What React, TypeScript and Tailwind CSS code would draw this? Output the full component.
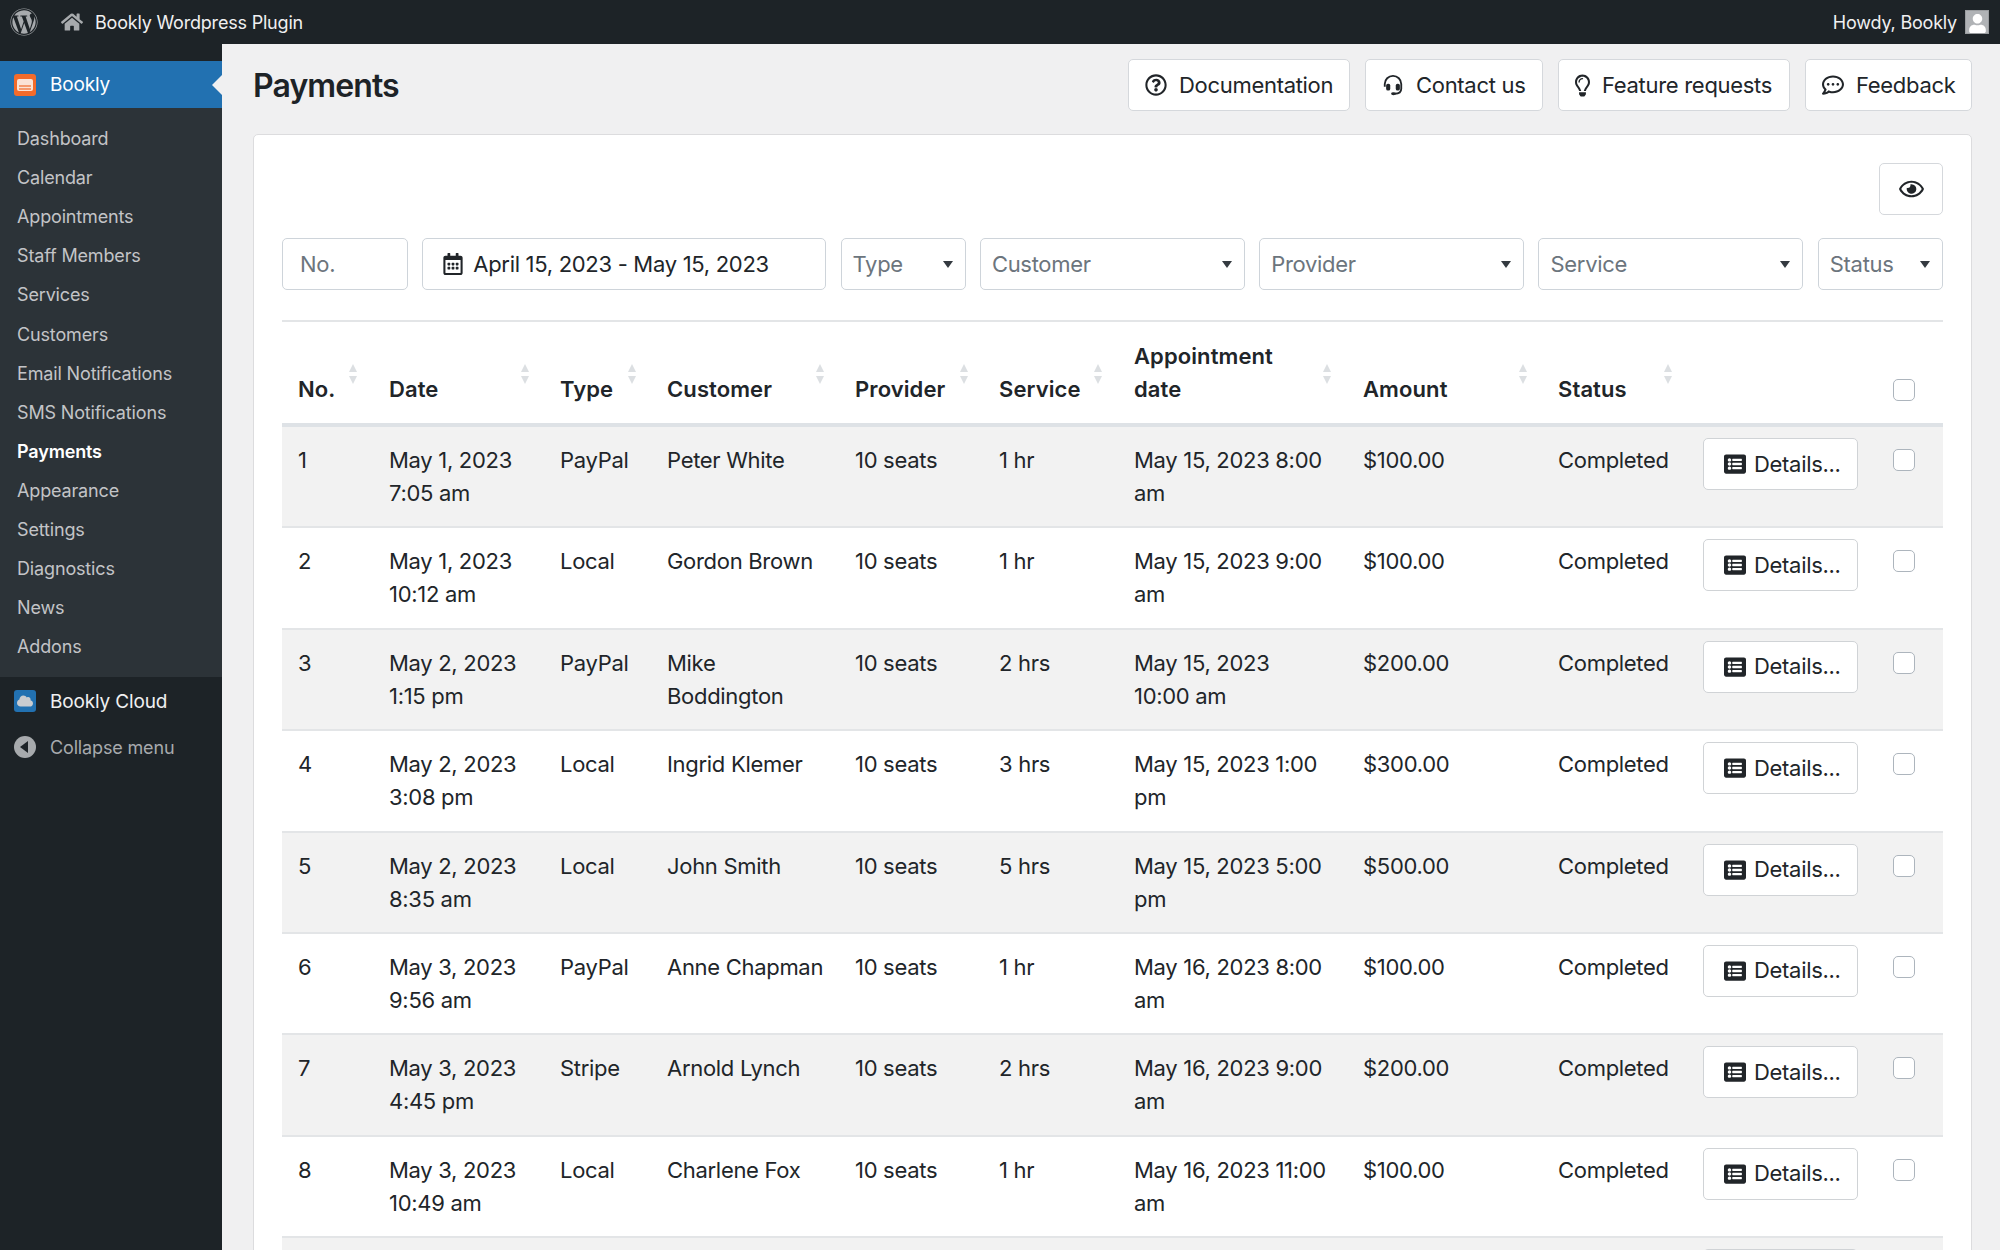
import { FaWordpress, FaHome, FaRegQuestionCircle, FaRegLightbulb, FaRegCommentDots, FaRegEye, FaRegCalendarAlt, FaListAlt, FaCloud, FaUser } from "react-icons/fa";

const menu = [
  "Dashboard",
  "Calendar",
  "Appointments",
  "Staff Members",
  "Services",
  "Customers",
  "Email Notifications",
  "SMS Notifications",
  "Payments",
  "Appearance",
  "Settings",
  "Diagnostics",
  "News",
  "Addons",
];

const rows = [
  ["1", "May 1, 2023", "7:05 am", "PayPal", "Peter White", "10 seats", "1 hr", "May 15, 2023 8:00 am", "$100.00"],
  ["2", "May 1, 2023", "10:12 am", "Local", "Gordon Brown", "10 seats", "1 hr", "May 15, 2023 9:00 am", "$100.00"],
  ["3", "May 2, 2023", "1:15 pm", "PayPal", "Mike Boddington", "10 seats", "2 hrs", "May 15, 2023 10:00 am", "$200.00"],
  ["4", "May 2, 2023", "3:08 pm", "Local", "Ingrid Klemer", "10 seats", "3 hrs", "May 15, 2023 1:00 pm", "$300.00"],
  ["5", "May 2, 2023", "8:35 am", "Local", "John Smith", "10 seats", "5 hrs", "May 15, 2023 5:00 pm", "$500.00"],
  ["6", "May 3, 2023", "9:56 am", "PayPal", "Anne Chapman", "10 seats", "1 hr", "May 16, 2023 8:00 am", "$100.00"],
  ["7", "May 3, 2023", "4:45 pm", "Stripe", "Arnold Lynch", "10 seats", "2 hrs", "May 16, 2023 9:00 am", "$200.00"],
  ["8", "May 3, 2023", "10:49 am", "Local", "Charlene Fox", "10 seats", "1 hr", "May 16, 2023 11:00 am", "$100.00"],
];

const gridCols = "grid grid-cols-[91px_171px_107px_188px_144px_135px_229px_195px_145px_190px_66px]";

const HeadsetIcon = () => (
  <svg viewBox="0 0 24 24" className="h-[24px] w-[22px]" fill="none" stroke="currentColor" strokeWidth="2">
    <path d="M3 14v-3a9 9 0 0 1 18 0v5c0 3.5-3 5.5-7 5.5" />
    <rect x="4.5" y="10.5" width="4.5" height="7.5" rx="2" fill="currentColor" stroke="none" />
    <rect x="15" y="10.5" width="4.5" height="7.5" rx="2" fill="currentColor" stroke="none" />
    <ellipse cx="12.5" cy="21.5" rx="2.6" ry="1.6" fill="currentColor" stroke="none" />
  </svg>
);

const BooklyIcon = () => (
  <div className="flex h-[22px] w-[22px] items-center justify-center rounded-[3px] bg-[#f26b2b]">
    <div className="flex h-[12px] w-[16px] flex-col justify-end rounded-[2px] bg-[#fbe3d6] pb-[1px]">
      <div className="mx-[2px] mb-[1px] h-[2px] bg-[#f59a6e]" />
      <div className="mx-[2px] h-[2px] bg-[#f59a6e]" />
    </div>
  </div>
);

const Sort = ({ className }: { className: string }) => (
  <div className={`absolute bottom-[39px] flex flex-col gap-[4px] ${className}`}>
    <div className="h-0 w-0 border-x-[4px] border-b-[8px] border-x-transparent border-b-[#dcdfe2]" />
    <div className="h-0 w-0 border-x-[4px] border-t-[8px] border-x-transparent border-t-[#dcdfe2]" />
  </div>
);

const Head = ({ label, sort }: { label: React.ReactNode; sort?: string }) => (
  <div className="relative self-end pb-[17px] pl-[16px] pr-[4px] font-semibold tracking-[0.1px]">
    {label}
    {sort && <Sort className={sort} />}
  </div>
);

const Select = ({ label, width }: { label: string; width: string }) => (
  <div className={`flex h-[52px] items-center justify-between rounded-[5px] border border-[#ced4da] bg-white pl-[11px] pr-[12px] text-[#6c757d] ${width}`}>
    <span>{label}</span>
    <div className="h-0 w-0 border-x-[5px] border-t-[7px] border-x-transparent border-t-[#343a40]" />
  </div>
);

const TopButton = ({ icon, label, width }: { icon: React.ReactNode; label: string; width: string }) => (
  <div className={`flex h-[52px] items-center gap-[12px] rounded-[5px] border border-[#d5d8dc] bg-white pl-[16px] ${width}`}>
    {icon}
    <span>{label}</span>
  </div>
);

export default function App() {
  return (
    <div className="flex h-[1250px] w-[2000px] flex-col overflow-hidden bg-[#f0f0f1] font-['Inter',sans-serif] text-[22px] leading-[33px] tracking-[-0.3px] text-[#212529]">
      {/* Admin bar */}
      <div className="flex h-[44px] shrink-0 items-center justify-between bg-[#1d2327] text-[18px] tracking-[-0.2px] text-[#f0f0f1]">
        <div className="flex items-center">
          <FaWordpress className="ml-[10px] h-[28px] w-[28px] text-[#a7aaad]" />
          <FaHome className="ml-[23px] h-[22px] w-[22px] text-[#a7aaad]" />
          <span className="ml-[12px]">Bookly Wordpress Plugin</span>
        </div>
        <div className="flex items-center">
          <span>Howdy, Bookly</span>
          <div className="ml-[8px] mr-[11px] flex h-[24px] w-[24px] items-end justify-center overflow-hidden border border-[#9a9da0] bg-[#b0b3b6]">
            <FaUser className="h-[19px] w-[17px] text-white" />
          </div>
        </div>
      </div>

      <div className="flex min-h-0 flex-1">
        {/* Sidebar */}
        <div className="flex w-[222px] shrink-0 flex-col bg-[#1d2327] text-[18px] tracking-[-0.15px]">
          <div className="relative mt-[17px] flex h-[47px] items-center bg-[#2271b1] pl-[14px] text-[19px] text-white">
            <BooklyIcon />
            <span className="ml-[14px]">Bookly</span>
            <div className="absolute right-0 top-[14px] h-0 w-0 border-y-[10px] border-r-[10px] border-y-transparent border-r-[#f0f0f1]" />
          </div>
          <div className="bg-[#2c3338] pb-[11px] pl-[17px] pt-[11px] text-[#c3c4c7]">
            {menu.map((item) => (
              <div key={item} className={`flex h-[39.1px] items-center ${item === "Payments" ? "font-semibold text-white" : ""}`}>
                {item}
              </div>
            ))}
          </div>
          <div className="mt-[6px] flex h-[36px] items-center pl-[14px] text-[19px] text-[#f0f0f1]">
            <div className="flex h-[22px] w-[22px] items-center justify-center rounded-[3px] bg-[#2271b1]">
              <FaCloud className="h-[14px] w-[16px] text-[#c9ccd0]" />
            </div>
            <span className="ml-[14px]">Bookly Cloud</span>
          </div>
          <div className="mt-[10px] flex h-[36px] items-center pl-[14px] text-[#a7aaad]">
            <div className="flex h-[22px] w-[22px] items-center justify-center rounded-full bg-[#a7aaad]">
              <div className="mr-[2px] h-0 w-0 border-y-[6px] border-r-[8px] border-y-transparent border-r-[#1d2327]" />
            </div>
            <span className="ml-[14px]">Collapse menu</span>
          </div>
        </div>

        {/* Main */}
        <div className="min-w-0 flex-1 pl-[31px] pr-[28px]">
          <div className="flex h-[90px] items-start justify-between pt-[15px]">
            <h1 className="mt-[8px] text-[32px] font-semibold leading-[38px] tracking-[-0.9px] text-[#1d2327]">Payments</h1>
            <div className="flex gap-[15px]">
              <TopButton width="w-[222px]" icon={<FaRegQuestionCircle className="h-[22px] w-[22px]" />} label="Documentation" />
              <TopButton width="w-[178px]" icon={<HeadsetIcon />} label="Contact us" />
              <TopButton width="w-[232px]" icon={<FaRegLightbulb className="h-[23px] w-[15px]" />} label="Feature requests" />
              <TopButton width="w-[167px]" icon={<FaRegCommentDots className="h-[22px] w-[22px]" />} label="Feedback" />
            </div>
          </div>

          <div className="h-[1200px] rounded-t-[5px] border border-[#dcdcde] bg-white pl-[28px] pr-[28px] pt-[28px]">
            <div className="flex justify-end">
              <div className="flex h-[52px] w-[64px] items-center justify-center rounded-[5px] border border-[#d5d8dc]">
                <FaRegEye className="h-[22px] w-[25px]" />
              </div>
            </div>

            {/* Filters */}
            <div className="mt-[23px] flex gap-[14.3px]">
              <div className="flex h-[52px] w-[126px] items-center rounded-[5px] border border-[#ced4da] pl-[17px] text-[#6c757d]">No.</div>
              <div className="flex h-[52px] w-[404px] items-center rounded-[5px] border border-[#ced4da] pl-[20px]">
                <FaRegCalendarAlt className="h-[22px] w-[20px]" />
                <span className="ml-[10px]">April 15, 2023 - May 15, 2023</span>
              </div>
              <Select label="Type" width="w-[125px]" />
              <Select label="Customer" width="w-[265px]" />
              <Select label="Provider" width="w-[265px]" />
              <Select label="Service" width="w-[265px]" />
              <Select label="Status" width="w-[125px]" />
            </div>

            <div className="mt-[30px] border-t-2 border-[#e3e5e7]" />

            {/* Table header */}
            <div className={`${gridCols} h-[105px] border-b-[4px] border-[#dee2e6]`}>
              <Head label="No." sort="left-[67px]" />
              <Head label="Date" sort="left-[148px]" />
              <Head label="Type" sort="left-[84px]" />
              <Head label="Customer" sort="left-[165px]" />
              <Head label="Provider" sort="left-[121px]" />
              <Head label="Service" sort="left-[111px]" />
              <Head label={<>Appointment<br />date</>} sort="left-[205px]" />
              <Head label="Amount" sort="left-[172px]" />
              <Head label="Status" sort="left-[122px]" />
              <div />
              <div className="relative self-end pb-[22px] pl-[16px]">
                <div className="h-[22px] w-[22px] rounded-[5px] border border-[#adb5bd] bg-white" />
              </div>
            </div>

            {/* Table body */}
            {rows.map((r, i) => (
              <div key={r[0]} className={`${gridCols} h-[101.4px] border-b-2 border-[#e3e5e7] ${i % 2 === 0 ? "bg-[#f2f2f2]" : "bg-white"}`}>
                <div className="pl-[16px] pt-[17px]">{r[0]}</div>
                <div className="pl-[16px] pt-[17px]">
                  {r[1]}
                  <br />
                  {r[2]}
                </div>
                <div className="pl-[16px] pt-[17px]">{r[3]}</div>
                <div className="pl-[16px] pr-[12px] pt-[17px]">{r[4]}</div>
                <div className="pl-[16px] pt-[17px]">{r[5]}</div>
                <div className="pl-[16px] pt-[17px]">{r[6]}</div>
                <div className="pl-[16px] pr-[19px] pt-[17px]">{r[7]}</div>
                <div className="pl-[16px] pt-[17px]">{r[8]}</div>
                <div className="pl-[16px] pt-[17px]">Completed</div>
                <div className="pl-[16px] pt-[11px]">
                  <div className="flex h-[52px] w-[155px] items-center rounded-[5px] border border-[#d0d3d6] bg-white pl-[20px]">
                    <FaListAlt className="h-[22px] w-[22px]" />
                    <span className="ml-[8px]">Details...</span>
                  </div>
                </div>
                <div className="pl-[16px] pt-[22px]">
                  <div className="h-[22px] w-[22px] rounded-[5px] border border-[#adb5bd] bg-white" />
                </div>
              </div>
            ))}

            {/* Next row, only the top edge of its button shows above the fold */}
            <div className={`${gridCols} h-[101.4px] bg-[#f2f2f2]`}>
              <div className="col-start-10 pl-[16px] pt-[11px]">
                <div className="h-[52px] w-[155px] rounded-[5px] border border-[#d0d3d6] bg-white" />
              </div>
            </div>
          </div>
        </div>
      </div>
    </div>
  );
}
